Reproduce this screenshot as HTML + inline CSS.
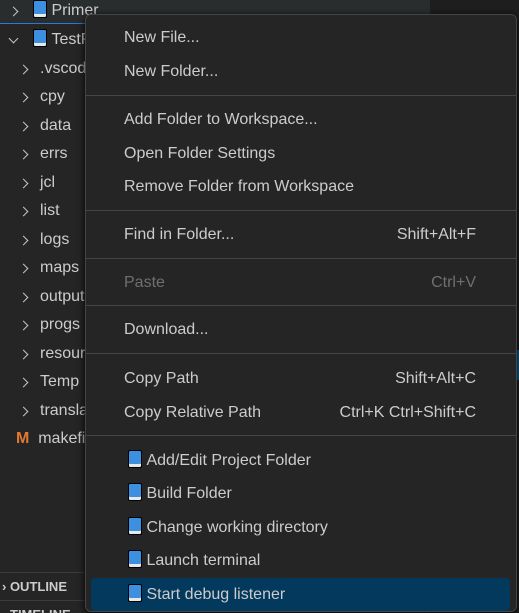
<!DOCTYPE html><html><head><style>
html,body{margin:0;width:519px;height:613px;overflow:hidden}
body{background:#1e1e1e;font-family:"Liberation Sans",sans-serif;position:relative}
.sb{position:absolute;left:0;top:0;width:430px;height:613px;background:#252526}
.ed{position:absolute;left:430px;top:0;width:89px;height:613px;background:#1e1e1e}
.r{position:absolute;height:28px;line-height:28px;color:#cccccc;font-size:16px;white-space:nowrap}
.cv{position:absolute;width:6px;height:6px;border-right:1.3px solid #c5c5c5;border-bottom:1.3px solid #c5c5c5}
.bk{display:inline-block;width:12px;height:16px;background:#3d8fe0;border:1px solid #000;border-radius:2px;box-shadow:inset 0 -3px 0 #e8e8e8;vertical-align:-3px}
.m{position:absolute;left:85px;top:14px;width:430px;height:596px;background:#252526;border:1px solid #454545;border-radius:6px;box-shadow:0 2px 8px #000}
.i{position:absolute;left:38px;right:40px;height:30px;line-height:30px;font-size:16px;color:#cccccc;white-space:nowrap}
.i span{position:absolute;right:0}
.s{position:absolute;left:0;right:0;height:1px;background:#454545}
.d{color:#6f6f6f}
</style></head><body>
<div class="sb"></div>
<div class="ed"></div>
<div style="position:absolute;left:0;top:0;width:430px;height:23px;background:#2a2d2e;border-bottom:1px solid #2b79d0"></div>
<div class="cv" style="left:10px;top:8px;transform:rotate(-45deg)"></div>
<div class="r" style="top:-3px;left:33px"><span class="bk"></span>&nbsp;Primer</div>
<div class="cv" style="left:10px;top:35px;transform:rotate(45deg)"></div>
<div class="r" style="top:26px;left:33px"><span class="bk"></span>&nbsp;TestP</div>
<div id="kids"></div>
<div class="r" style="top:425px;left:16px"><b style="color:#e37933">M</b>&nbsp;&nbsp;makefile</div>
<div style="position:absolute;left:0;top:572px;width:430px;height:1px;background:#3c3c3c"></div>
<div class="r" style="top:573px;left:2px;font-size:13px;font-weight:bold">›&nbsp;OUTLINE</div>
<div style="position:absolute;left:0;top:600px;width:430px;height:1px;background:#3c3c3c"></div>
<div class="r" style="top:601px;left:10px;font-size:13px;font-weight:bold">TIMELINE</div>
<div style="position:absolute;left:513px;top:350px;width:6px;height:30px;background:#0e639c"></div>

<div class="cv" style="left:20px;top:66px;transform:rotate(-45deg)"></div><div class="r" style="top:55px;left:40px">.vscode</div>
<div class="cv" style="left:20px;top:94px;transform:rotate(-45deg)"></div><div class="r" style="top:83px;left:40px">cpy</div>
<div class="cv" style="left:20px;top:123px;transform:rotate(-45deg)"></div><div class="r" style="top:112px;left:40px">data</div>
<div class="cv" style="left:20px;top:151px;transform:rotate(-45deg)"></div><div class="r" style="top:140px;left:40px">errs</div>
<div class="cv" style="left:20px;top:180px;transform:rotate(-45deg)"></div><div class="r" style="top:169px;left:40px">jcl</div>
<div class="cv" style="left:20px;top:208px;transform:rotate(-45deg)"></div><div class="r" style="top:197px;left:40px">list</div>
<div class="cv" style="left:20px;top:237px;transform:rotate(-45deg)"></div><div class="r" style="top:226px;left:40px">logs</div>
<div class="cv" style="left:20px;top:265px;transform:rotate(-45deg)"></div><div class="r" style="top:254px;left:40px">maps</div>
<div class="cv" style="left:20px;top:294px;transform:rotate(-45deg)"></div><div class="r" style="top:283px;left:40px">output</div>
<div class="cv" style="left:20px;top:322px;transform:rotate(-45deg)"></div><div class="r" style="top:311px;left:40px">progs</div>
<div class="cv" style="left:20px;top:351px;transform:rotate(-45deg)"></div><div class="r" style="top:340px;left:40px">resources</div>
<div class="cv" style="left:20px;top:379px;transform:rotate(-45deg)"></div><div class="r" style="top:368px;left:40px">Temp</div>
<div class="cv" style="left:20px;top:408px;transform:rotate(-45deg)"></div><div class="r" style="top:397px;left:40px">translate</div>

<div class="m">
<div class="i" style="top:8px">New File...</div>
<div class="i" style="top:42px">New Folder...</div>
<div class="s" style="top:80px"></div>
<div class="i" style="top:90px">Add Folder to Workspace...</div>
<div class="i" style="top:124px">Open Folder Settings</div>
<div class="i" style="top:157px">Remove Folder from Workspace</div>
<div class="s" style="top:195px"></div>
<div class="i" style="top:205px">Find in Folder...<span>Shift+Alt+F</span></div>
<div class="s" style="top:243px"></div>
<div class="i d" style="top:253px">Paste<span>Ctrl+V</span></div>
<div class="s" style="top:290px"></div>
<div class="i" style="top:300px">Download...</div>
<div class="s" style="top:338px"></div>
<div class="i" style="top:349px">Copy Path<span>Shift+Alt+C</span></div>
<div class="i" style="top:383px">Copy Relative Path<span>Ctrl+K Ctrl+Shift+C</span></div>
<div class="s" style="top:420px"></div>
<div style="position:absolute;left:5px;right:6px;top:563px;height:33px;background:#04395e;border-radius:4px"></div>
<div class="i" style="top:431px;left:42px"><span class="bk" style="position:static"></span>&nbsp;Add/Edit Project Folder</div>
<div class="i" style="top:464px;left:42px"><span class="bk" style="position:static"></span>&nbsp;Build Folder</div>
<div class="i" style="top:498px;left:42px"><span class="bk" style="position:static"></span>&nbsp;Change working directory</div>
<div class="i" style="top:531px;left:42px"><span class="bk" style="position:static"></span>&nbsp;Launch terminal</div>
<div class="i" style="top:565px;left:42px"><span class="bk" style="position:static"></span>&nbsp;Start debug listener</div>
</div>
</body></html>
